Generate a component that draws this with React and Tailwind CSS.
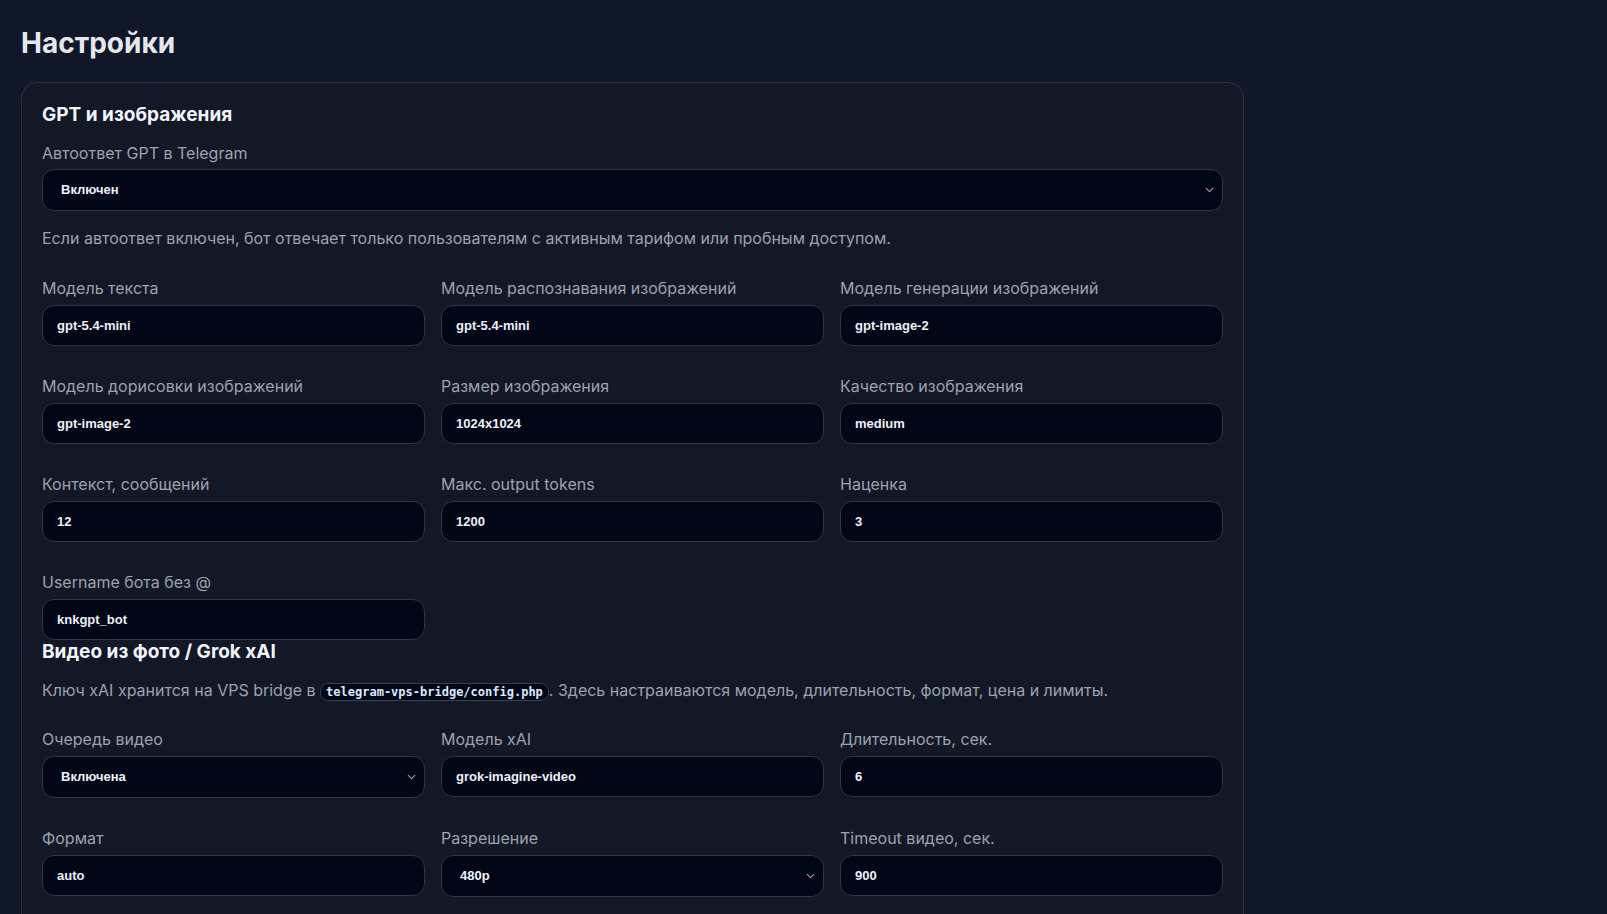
import { ChevronDown } from 'lucide-react';

const gptFields = [
  { label: 'Модель текста', value: 'gpt-5.4-mini' },
  { label: 'Модель распознавания изображений', value: 'gpt-5.4-mini' },
  { label: 'Модель генерации изображений', value: 'gpt-image-2' },
  { label: 'Модель дорисовки изображений', value: 'gpt-image-2' },
  { label: 'Размер изображения', value: '1024x1024' },
  { label: 'Качество изображения', value: 'medium' },
  { label: 'Контекст, сообщений', value: '12' },
  { label: 'Макс. output tokens', value: '1200' },
  { label: 'Наценка', value: '3' },
  { label: 'Username бота без @', value: 'knkgpt_bot' },
];

const videoFields = [
  { label: 'Очередь видео', value: 'Включена', select: ['Включена', 'Выключена'] },
  { label: 'Модель xAI', value: 'grok-imagine-video' },
  { label: 'Длительность, сек.', value: '6' },
  { label: 'Формат', value: 'auto' },
  { label: 'Разрешение', value: '480p', select: ['480p', '720p'] },
  { label: 'Timeout видео, сек.', value: '900' },
  { label: 'Цена видео, ₽', value: '49' },
  { label: 'Лимит видео в день', value: '5' },
  { label: 'Параллельных задач', value: '2' },
];

const payFields = [
  { label: 'Провайдер оплаты', value: 'ЮKassa', select: ['ЮKassa', 'CloudPayments'] },
  { label: 'Shop ID', value: '' },
  { label: 'Валюта', value: 'RUB' },
  { label: 'Пробный доступ, дней', value: '1' },
  { label: 'Пробных запросов', value: '10' },
  { label: 'Реферальный бонус, ₽', value: '50' },
];

const Select = ({ value, options, className = '' }) => (
  <div className={`relative ${className}`}>
    <select
      defaultValue={value}
      className="block w-full h-[42px] appearance-none rounded-xl border border-[#2c3647] bg-[#020617] pl-[18px] pr-8 font-['Liberation_Sans',Arial,sans-serif] text-[13px] font-bold text-[#eef2f7] outline-none"
    >
      {options.map((o) => (
        <option key={o}>{o}</option>
      ))}
    </select>
    <ChevronDown className="pointer-events-none absolute right-[7px] top-1/2 h-[13px] w-[13px] -translate-y-1/2 text-[#9ca3af]" strokeWidth={2} />
  </div>
);

const Field = ({ label, value, select }) => (
  <div>
    <label className="mb-[5px] block text-base leading-6 text-[#9ca3af]">{label}</label>
    {select ? (
      <Select value={value} options={select} />
    ) : (
      <input
        defaultValue={value}
        className="block w-full h-[41px] rounded-xl border border-[#2c3647] bg-[#020617] px-[14px] font-['Liberation_Sans',Arial,sans-serif] text-[13px] font-bold text-[#eef2f7] outline-none"
      />
    )}
  </div>
);

const Grid = ({ fields, className = '' }) => (
  <div className={`grid grid-cols-3 gap-x-4 gap-y-7 ${className}`}>
    {fields.map((f) => (
      <Field key={f.label} {...f} />
    ))}
  </div>
);

export default function App() {
  return (
    <div className="min-h-[3130px] bg-[#0f1729] pl-[21px] pt-[23px] pb-10 font-['Inter',sans-serif] text-[#e5e7eb]">
      <h1 className="mb-[19px] text-[28px] font-bold leading-[40px] text-[#e5e7eb]">Настройки</h1>

      <div className="w-[1223px] rounded-2xl border border-[#283244] bg-[#121826] p-5">
        <h2 className="mb-[14px] text-[19px] font-bold leading-6 text-[#f1f5f9]">GPT и изображения</h2>
        <label className="mb-1 block text-base leading-6 text-[#9ca3af]">Автоответ GPT в Telegram</label>
        <Select value="Включен" options={['Включен', 'Выключен']} />
        <p className="mt-[15px] text-base leading-6 text-[#9ca3af]">
          Если автоответ включен, бот отвечает только пользователям с активным тарифом или пробным доступом.
        </p>
        <Grid fields={gptFields} className="mt-[26px]" />

        <h2 className="text-[19px] font-bold leading-6 text-[#f1f5f9]">Видео из фото / Grok xAI</h2>
        <p className="mt-[14px] text-base leading-6 text-[#9ca3af]">
          Ключ xAI хранится на VPS bridge в{' '}
          <code className="rounded-lg border border-[#334155] bg-[#020617] px-[5px] py-[1px] font-['DejaVu_Sans_Mono',monospace] text-[12px] font-semibold leading-[19px] text-[#dbeafe]">
            telegram-vps-bridge/config.php
          </code>
          . Здесь настраиваются модель, длительность, формат, цена и лимиты.
        </p>
        <Grid fields={videoFields} className="mt-[25px]" />

        <h2 className="mt-8 text-[19px] font-bold leading-6 text-[#f1f5f9]">Оплата и пробный доступ</h2>
        <p className="mt-[14px] text-base leading-6 text-[#9ca3af]">
          Секретный ключ платёжной системы задаётся в конфигурации сервера.
        </p>
        <Grid fields={payFields} className="mt-[25px]" />

        <div className="mt-8 flex gap-3">
          <button className="rounded-xl bg-[#2563eb] px-5 py-2.5 text-sm font-semibold text-white">Сохранить</button>
          <button className="rounded-xl border border-[#334155] px-5 py-2.5 text-sm font-semibold text-[#cbd5e1]">Отмена</button>
        </div>
      </div>
    </div>
  );
}
